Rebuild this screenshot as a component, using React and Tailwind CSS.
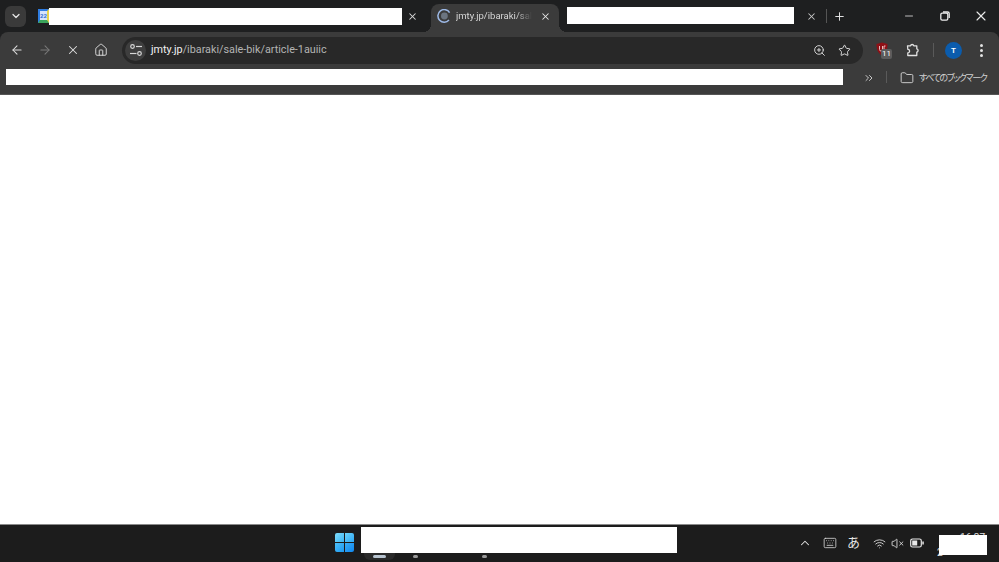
import React from 'react';
import { ArrowLeft, ArrowRight, X, House, ZoomIn, Star, ChevronDown, ChevronUp, ChevronsRight, Folder, Keyboard, Wifi, VolumeX, Plus, Minus } from 'lucide-react';

const ui = { fontFamily: 'Roboto, "Noto Sans CJK JP", sans-serif' };

const Redact = ({ className }) => <div className={`bg-white shrink-0 ${className}`} />;

const TuneIcon = () => (
    <svg width="14" height="14" viewBox="0 0 14 14" fill="none" stroke="#d8d8d8" strokeWidth="1.2">
        <circle cx="3.5" cy="3.5" r="1.8" />
        <path d="M7 3.5h6" />
        <circle cx="10.5" cy="10.5" r="1.8" />
        <path d="M1 10.5h6.5" />
    </svg>
);

const RestoreIcon = () => (
    <svg width="10" height="10" viewBox="0 0 10 10" fill="none" stroke="#ececec" strokeWidth="1.3">
        <rect x="0.8" y="2.2" width="7" height="7" rx="1.4" />
        <path d="M3 1h4.6a1.6 1.6 0 0 1 1.6 1.6V7" />
    </svg>
);

const Favicon = () => (
    <div className="w-[11px] h-[14px] shrink-0 border-t-2 border-l-2 border-b-[3px] border-r-2 border-t-[#2f7de1] border-l-[#2f7de1] border-b-[#3ba55c] border-r-[#e8d44a] bg-[#d5e3fa] text-[6px] leading-[9px] text-[#2f6fd0] font-bold overflow-hidden whitespace-nowrap">22</div>
);

const LoadingIcon = () => (
    <svg width="14" height="14" viewBox="0 0 14 14" fill="none" className="shrink-0">
        <path d="M12.6 3.6A6.3 6.3 0 1 0 12 11" stroke="#9db9e6" strokeWidth="1.5" />
        <circle cx="7.4" cy="7" r="3.4" fill="#6b7480" />
    </svg>
);

const PuzzleIcon = () => (
    <svg width="16" height="16" viewBox="0 0 16 16" fill="none" stroke="#e2e2e2" strokeWidth="1.3" strokeLinejoin="round">
        <path d="M2.5 3.8h3a1.7 1.7 0 0 1 3.3 0h3v3a1.7 1.7 0 0 1 0 3.3v3.4h-9v-2.6a1.7 1.7 0 0 0 0-3.6z" />
    </svg>
);

const Shield = () => (
    <div className="relative w-[14px] h-[16px]">
        <svg width="12" height="14" viewBox="0 0 12 14">
            <path d="M6 0.5 11.5 2c0 5-1 9-5.5 11.5C1.500 11 .5 7 .5 2z" fill="#8f1016" />
            <path d="M3.500 4v3.500a1.500 1.500 0 0 0 3 0V4M8 8V4h1.500" fill="none" stroke="#e9b9b9" strokeWidth="1" />
        </svg>
        <div className="absolute left-[5px] top-[7px] w-[11px] h-[10px] rounded-[2px] bg-[#5c5c5c] text-[8px] leading-[10px] text-white text-center">11</div>
    </div>
);

const BatteryIcon = () => (
    <svg width="14" height="10" viewBox="0 0 14 10" fill="none">
        <rect x="0.7" y="1" width="10.600" height="8" rx="1.800" stroke="#e8e8e8" strokeWidth="1.200" />
        <rect x="2.200" y="2.500" width="5" height="5" fill="#e8e8e8" />
        <rect x="12.300" y="3.500" width="1.500" height="3" fill="#e8e8e8" />
    </svg>
);

const WinLogo = () => (
    <div className="grid grid-cols-2 gap-px w-[19px] h-[19px] shrink-0">
        <div className="rounded-tl-[2px] bg-[linear-gradient(135deg,#7fdcfb,#3cb6f5)]" />
        <div className="rounded-tr-[2px] bg-[linear-gradient(135deg,#6cd3fa,#2da8f5)]" />
        <div className="rounded-bl-[2px] bg-[linear-gradient(135deg,#4cc0f8,#1c98f2)]" />
        <div className="rounded-br-[2px] bg-[linear-gradient(135deg,#38aef7,#0f86ee)]" />
    </div>
);

const TabStrip = () => (
    <div className="h-8 bg-[#1e1f20] flex items-center shrink-0">
        <div className="ml-[5px] w-[21px] h-[21px] rounded-md bg-[#3a3a3a] flex items-center justify-center shrink-0">
            <ChevronDown size={12} strokeWidth={2.5} color="#e6e6e6" />
        </div>
        <div className="ml-[12px] flex items-center">
            <Favicon />
            <Redact className="w-[353px] h-[17px]" />
        </div>
        <X size={11} strokeWidth={2.2} color="#dcdcdc" className="ml-[5px] shrink-0" />
        <div className="relative ml-[13px] w-[128px] h-[28px] mt-1 pb-[4px] bg-[#3b3b3b] rounded-t-lg flex items-center pl-[6px] shrink-0">
            <div className="absolute -left-2 bottom-0 w-2 h-2 bg-[radial-gradient(circle_at_0_0,transparent_8px,#3b3b3b_8px)]" />
            <div className="absolute -right-2 bottom-0 w-2 h-2 bg-[radial-gradient(circle_at_100%_0,transparent_8px,#3b3b3b_8px)]" />
            <LoadingIcon />
            <span className="ml-[5px] w-[76px] whitespace-nowrap text-[9.5px] text-[#d6d6d6] mask-r-from-80%">jmty.jp/ibaraki/sale</span>
            <X size={11} strokeWidth={2.2} color="#e6e6e6" className="ml-[8px] shrink-0" />
        </div>
        <Redact className="ml-[8px] w-[227px] h-[17px] -mt-[2px]" />
        <X size={11} strokeWidth={2.2} color="#c8c8c8" className="ml-[12px] shrink-0" />
        <div className="ml-[9px] w-px h-[14px] bg-[#555] shrink-0" />
        <Plus size={13} strokeWidth={1.8} color="#e6e6e6" className="ml-[6px] shrink-0" />
        <Minus size={12} strokeWidth={1.6} color="#e6e6e6" className="ml-[57px] shrink-0" />
        <div className="ml-[25px] shrink-0 flex"><RestoreIcon /></div>
        <X size={16} strokeWidth={1.6} color="#ececec" className="ml-[23px] shrink-0" />
    </div>
);

const Toolbar = () => (
    <div className="h-[35px] pt-px flex items-center shrink-0">
        <ArrowLeft size={14} strokeWidth={1.8} color="#dedede" className="ml-[10px] shrink-0" />
        <ArrowRight size={14} strokeWidth={1.8} color="#7a7a7a" className="ml-[14px] shrink-0" />
        <X size={14} strokeWidth={1.8} color="#dedede" className="ml-[14px] shrink-0" />
        <House size={14} strokeWidth={1.6} color="#dedede" className="ml-[14px] shrink-0" />
        <div className="ml-[14px] w-[741px] h-[27px] rounded-full bg-[#282828] flex items-center pl-[3px] pr-[12px] shrink-0">
            <div className="w-[21px] h-[21px] rounded-full bg-[#3e3e3e] flex items-center justify-center shrink-0"><TuneIcon /></div>
            <div className="ml-[5px] text-[10.8px] text-[#b4b4b4] whitespace-nowrap"><span className="text-[#f0f0f0]">jmty.jp</span>/ibaraki/sale-bik/article-1auiic</div>
            <ZoomIn size={13} strokeWidth={1.7} color="#dedede" className="ml-auto shrink-0" />
            <Star size={13} strokeWidth={1.7} color="#e6e6e6" className="ml-[12px] shrink-0" />
        </div>
        <div className="ml-[13px] shrink-0"><Shield /></div>
        <div className="ml-[15px] shrink-0"><PuzzleIcon /></div>
        <div className="ml-[12px] w-px h-[14px] bg-[#5a5a5a] shrink-0" />
        <div className="ml-[11px] w-[17px] h-[17px] rounded-full bg-[#0b5cad] text-white text-[8px] leading-[17px] text-center font-semibold shrink-0">T</div>
        <div className="ml-[18px] flex flex-col gap-[2px] shrink-0">
            <span className="w-[3px] h-[3px] rounded-full bg-[#e2e2e2]" />
            <span className="w-[3px] h-[3px] rounded-full bg-[#e2e2e2]" />
            <span className="w-[3px] h-[3px] rounded-full bg-[#e2e2e2]" />
        </div>
    </div>
);

const BookmarkBar = () => (
    <div className="h-[28px] flex items-start pt-[2px] border-b border-[#555] shrink-0">
        <Redact className="ml-[6px] w-[837px] h-[16px]" />
        <ChevronsRight size={12} strokeWidth={1.8} color="#d8d8d8" className="ml-5 mt-[3px] shrink-0" />
        <div className="ml-[11px] mt-[2px] w-px h-[12px] bg-[#5a5a5a] shrink-0" />
        <Folder size={14} strokeWidth={1.5} color="#dedede" className="ml-[13px] mt-[2px] shrink-0" />
        <span className="ml-[5px] text-[9px] leading-[19px] tracking-[-1.4px] text-[#d0d0d0] whitespace-nowrap [font-feature-settings:'palt']">すべてのブックマーク</span>
    </div>
);

const Clock = () => (
    <div className="relative ml-[11px] w-[52px] h-[30px] pl-[2px] pr-[2px] text-[10px] leading-[13px] text-[#e0e0e0] shrink-0">
        <div className="text-right mt-[3px]">16:37</div>
        <div className="mt-[2px]">2</div>
        <Redact className="absolute left-[4px] top-[7px] w-[48px] h-[20px]" />
    </div>
);

const Taskbar = () => (
    <div className="h-[38px] bg-[#1c1c1c] border-t border-[#8a8a8a] flex shrink-0">
        <div className="ml-[335px] mt-2 shrink-0"><WinLogo /></div>
        <div className="ml-[7px] w-[316px] pt-[2px] shrink-0 flex flex-col">
            <Redact className="w-[316px] h-[26px]" />
            <div className="h-[7px] flex items-center">
                <div className="ml-[3px] w-[31px] h-[7px] rounded-b-md bg-[#2a2a2a] flex items-center justify-center">
                    <span className="w-[13px] h-[3px] rounded-full bg-[#b8c4d0]" />
                </div>
                <span className="ml-[18px] w-[5px] h-[3px] rounded-full bg-[#9a9a9a]" />
                <span className="ml-[64px] w-[5px] h-[3px] rounded-full bg-[#9a9a9a]" />
            </div>
        </div>
        <div className="flex items-center h-[36px]">
            <ChevronUp size={14} strokeWidth={1.8} color="#e6e6e6" className="ml-[121px] shrink-0" />
            <Keyboard size={14} strokeWidth={1.4} color="#d8d8d8" className="ml-[11px] shrink-0" />
            <span className="ml-[10px] w-[14px] text-[13px] text-[#e6e6e6] shrink-0" style={ui}>あ</span>
            <Wifi size={13} strokeWidth={1.6} color="#e6e6e6" className="ml-[12px] shrink-0" />
            <VolumeX size={13} strokeWidth={1.6} color="#e6e6e6" className="ml-[5px] shrink-0" />
            <div className="ml-[6px] flex shrink-0"><BatteryIcon /></div>
            <Clock />
        </div>
    </div>
);

export default function App() {
    return (
        <div className="w-[999px] h-[562px] flex flex-col overflow-hidden bg-[#1e1f20]" style={ui}>
            <TabStrip />
            <div className="bg-[#3b3b3b] rounded-t-lg flex flex-col shrink-0">
                <Toolbar />
                <BookmarkBar />
            </div>
            <div className="flex-1 bg-white" />
            <Taskbar />
        </div>
    );
}
